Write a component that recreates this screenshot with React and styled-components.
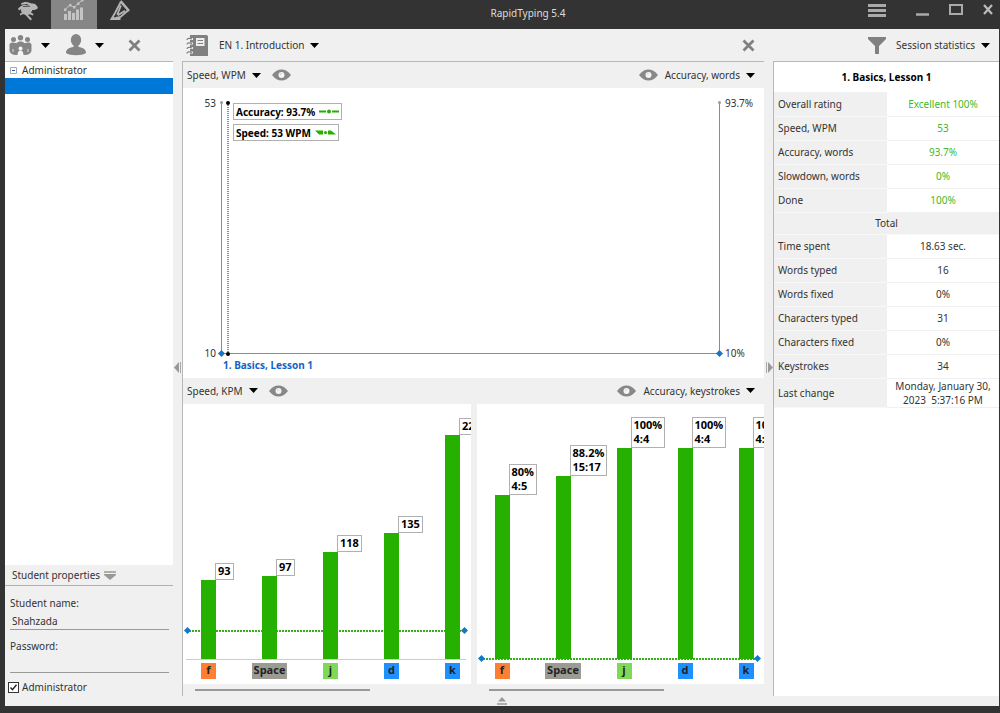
import React, { useState } from 'react';
import styled, { createGlobalStyle } from 'styled-components';

const GlobalStyle = createGlobalStyle`
    * {
        box-sizing: border-box;
    }

    body {
        margin: 0;
        background-color: #333333;
        color: #333333;
        font-family: "Noto Sans", "Open Sans", sans-serif;
        font-size: 10px;
        line-height: 14px;
    }

    button, input {
        font: inherit;
        color: inherit;
    }

    svg {
        display: block;
        flex: none;
    }
`

const Window = styled.div`
    display: flex;
    flex-direction: column;
    min-height: 100vh;
    padding: 0 1px 7px 5px;
    background-color: #333333;
`

const TitleBar = styled.header`
    display: grid;
    grid-template-columns: 1fr auto 1fr;
    height: 29px;
`

const Tabs = styled.nav`
    display: flex;
`

const TabButton = styled.button`
    display: flex;
    justify-content: center;
    width: 46px;
    height: 29px;
    padding: 0;
    border: 0;
    background-color: ${props => props.$active ? '#868686' : 'transparent'};
    cursor: pointer;
`

const AppTitle = styled.h1`
    margin: 0;
    padding-left: 52px;
    color: #dddddd;
    font-size: 10px;
    font-weight: normal;
    line-height: 26px;
`

const WindowControls = styled.div`
    display: flex;
    align-items: flex-start;
    justify-content: flex-end;
    gap: 20px;
    padding: 4px 6px 0 0;
`

const IconButton = styled.button`
    display: flex;
    align-items: center;
    justify-content: center;
    padding: 0;
    border: 0;
    background: none;
    cursor: pointer;
`

const MenuButton = styled(IconButton)`
    margin-right: 10px;
`

const Workspace = styled.main`
    display: flex;
    flex: 1;
    background-color: #f0f0f0;
`

const Splitter = styled.div`
    display: flex;
    align-items: center;
    justify-content: center;
    flex: none;
    width: 9px;
`

const Sidebar = styled.aside`
    display: flex;
    flex-direction: column;
    flex: none;
    width: 168px;
`

const Toolbar = styled.div`
    display: flex;
    align-items: center;
    justify-content: ${props => props.$justify || 'flex-start'};
    flex: none;
    gap: ${props => props.$gap || 10}px;
    height: 32px;
    padding: 0 9px 0 4px;
`

const Dropdown = styled.button`
    display: flex;
    align-items: center;
    gap: ${props => props.$gap || 6}px;
    padding: 0;
    border: 0;
    background: none;
    white-space: nowrap;
    cursor: pointer;
`

const DeleteButton = styled(IconButton)`
    margin-left: 8px;
`

const Tree = styled.ul`
    flex: 1;
    margin: 0;
    padding: 0;
    border-top: 1px solid #b8b8b8;
    background-color: white;
    list-style: none;
`

const TreeRow = styled.li`
    display: flex;
    align-items: center;
    gap: 5px;
    height: 16px;
    padding-left: 5px;
    background-color: ${props => props.$selected ? '#0078d7' : 'white'};
`

const PropertiesTitle = styled.button`
    display: flex;
    align-items: center;
    gap: 4px;
    height: 21px;
    padding: 0 7px;
    border: 0;
    border-bottom: 1px solid #b0b0b0;
    background: none;
    cursor: pointer;
`

const PropertiesForm = styled.form`
    display: flex;
    flex-direction: column;
    padding: 10px 4px 12px 3px;
`

const Field = styled.label`
    display: block;
    padding-left: 2px;

    & + & {
        margin-top: 9px;
    }

    input {
        display: block;
        width: 100%;
        height: 20px;
        padding: 3px 3px 0 2px;
        border: 0;
        border-bottom: 1px solid #999999;
        outline: 0;
        background: none;
    }
`

const CheckField = styled.label`
    display: flex;
    align-items: center;
    gap: 3px;
    height: 14px;
    margin-top: 7px;

    input {
        appearance: none;
        width: 11px;
        height: 11px;
        margin: 0;
        border: 1px solid #333333;
        background: white;
    }

    input:checked {
        background: white url("data:image/svg+xml,%3Csvg xmlns='http://www.w3.org/2000/svg' viewBox='0 0 9 9'%3E%3Cpath d='M1.5 4.5l2 2.2 4-5' fill='none' stroke='%23222' stroke-width='1.4'/%3E%3C/svg%3E");
    }
`

const Center = styled.section`
    display: flex;
    flex-direction: column;
    flex: 1;
    min-width: 0;
`

const ChartArea = styled.div`
    display: flex;
    flex-direction: column;
    flex: 1;
    border-top: 1px solid #b8b8b8;
    border-left: 1px solid #b8b8b8;
`

const ChartHeader = styled.div`
    display: flex;
    align-items: center;
    justify-content: space-between;
    flex: none;
    height: 26px;
    padding: 0 9px 0 4px;
`

const HeaderGroup = styled.div`
    display: flex;
    align-items: center;
    gap: ${props => props.$gap || 11}px;
`

const HistoryChart = styled.div`
    display: grid;
    grid-template-columns: 38px 1fr 44px;
    grid-template-rows: 1fr 18px;
    flex: 24 0 0;
    padding: 15px 0 6px;
    background-color: white;
`

const AxisLabels = styled.div`
    display: flex;
    flex-direction: column;
    justify-content: space-between;
    align-items: ${props => props.$right ? 'flex-start' : 'flex-end'};
    margin: -7px 0 -6px;
    padding: 0 5px;
`

const Plot = styled.div`
    position: relative;
    border: 1px solid #4a9be8;
    border-top: 0;
    padding-left: 5px;
`

const Cursor = styled.div`
    position: relative;
    height: 100%;
    padding-left: 6px;
    background: repeating-linear-gradient(#4a9be8 0 1px, white 1px 2px) 0 0 / 2px 100% no-repeat;
`

// Sits on a corner of its parent, centred on the line there
const Marker = styled.span`
    position: absolute;
    width: ${props => props.$size}px;
    height: ${props => props.$size}px;
    background-color: ${props => props.$color};
    border-radius: ${props => props.$diamond ? 0 : '50%'};
    transform: ${props => props.$diamond ? 'rotate(45deg)' : 'none'};
    ${props => props.$top ? 'top: -2px;' : 'bottom: -3px;'}
    ${props => props.$right ? 'right' : 'left'}: ${props => props.$inset || -3}px;
`

const Legend = styled.div`
    display: flex;
    flex-direction: column;
    align-items: flex-start;
    gap: 4px;
`

const LegendItem = styled.div`
    display: flex;
    align-items: center;
    gap: 4px;
    height: 17px;
    padding: 0 2px;
    border: 1px solid #b0b0b0;
    background-color: white;
    color: black;
    font-weight: bold;
`

const LessonCaption = styled.a`
    grid-column: 2;
    padding: 4px 2px 0;
    color: #1464c8;
    font-weight: bold;
    text-decoration: none;
`

const BarCharts = styled.div`
    display: grid;
    grid-template-columns: 1fr 1fr;
    gap: 6px;
    flex: 25 0 0;
`

const BarPanel = styled.div`
    display: flex;
    flex-direction: column;
    overflow: hidden;
    min-width: 0;
    background-color: white;
`

const BarPlot = styled.div`
    position: relative;
    display: flex;
    align-items: flex-end;
    flex: 1;
    gap: 16px;
    margin: 0 5px 0 3px;
    border-bottom: 1px solid #cccccc;
`

const BarColumn = styled.div`
    position: relative;
    z-index: 1;
    flex: none;
    width: 45px;
    padding: 0 15px;
`

const Bar = styled.div`
    position: relative;
    height: 100%;
    background-color: #26b000;
`

const BarValue = styled.div`
    position: absolute;
    left: 100%;
    bottom: 100%;
    margin-left: -1px;
    padding: 0 2px 1px;
    border: 1px solid #b0b0b0;
    background-color: white;
    color: black;
    font-family: "Open Sans", sans-serif;
    font-size: 11px;
    font-weight: bold;
    white-space: pre;
`

const Threshold = styled.div`
    position: absolute;
    left: 0;
    right: 0;
    height: 2px;
    margin-bottom: -1px;
    background: repeating-linear-gradient(90deg, #35b01a 0 2px, white 2px 3px);
`

const KeyRow = styled.div`
    display: flex;
    flex: none;
    gap: 16px;
    height: 24px;
    padding: 3px;
`

const KeySlot = styled.div`
    display: flex;
    justify-content: center;
    flex: none;
    width: 45px;
`

const KeyCap = styled.kbd`
    min-width: 15px;
    height: 16px;
    padding: 0 2px;
    background-color: ${props => props.$color};
    color: #222222;
    font-family: "Open Sans", sans-serif;
    font-size: 11px;
    font-weight: bold;
    text-align: center;
`

const ScrollRow = styled.div`
    display: grid;
    grid-template-columns: 1fr 1fr;
    gap: 6px;
    flex: none;
    height: 12px;
    padding-top: 5px;
`

const ScrollThumb = styled.div`
    width: 61%;
    height: 2px;
    margin-left: 12px;
    background-color: #999999;
`

const CollapseRow = styled.div`
    display: flex;
    align-items: center;
    justify-content: center;
    flex: none;
    height: 10px;
    padding-left: 58px;
`

const StatsPane = styled.aside`
    display: flex;
    flex-direction: column;
    flex: none;
    width: 226px;
`

const StatsBody = styled.div`
    flex: 1;
    margin-bottom: 10px;
    border-top: 1px solid #b8b8b8;
    border-left: 1px solid #b8b8b8;
    background-color: white;
`

const StatsTable = styled.table`
    width: 100%;
    border-collapse: collapse;
    table-layout: fixed;

    caption {
        height: 30px;
        color: black;
        font-weight: bold;
        line-height: 30px;
    }

    tr {
        height: 24px;
    }

    th, td {
        padding: 0 4px;
        font-weight: normal;
    }

    th {
        width: 113px;
        border-bottom: 1px solid #f8f8f8;
        background-color: #f0f0f0;
        text-align: left;
    }

    td {
        padding: 0 4px;
        border-bottom: 1px solid #f0f0f0;
        text-align: center;
    }
`

const ValueCell = styled.td`
    color: ${props => props.$good ? '#3fb92a' : '#333333'};
`

const SectionRow = styled.tr`
    && {
        height: 22px;
    }

    th {
        text-align: center;
    }
`

const rating = [
    ['Overall rating', 'Excellent 100%'],
    ['Speed, WPM', '53'],
    ['Accuracy, words', '93.7%'],
    ['Slowdown, words', '0%'],
    ['Done', '100%'],
]

const totals = [
    ['Time spent', '18.63 sec.'],
    ['Words typed', '16'],
    ['Words fixed', '0%'],
    ['Characters typed', '31'],
    ['Characters fixed', '0%'],
    ['Keystrokes', '34'],
]

const keys = [
    { name: 'f', color: '#ff7f32' },
    { name: 'Space', color: '#9b9b93' },
    { name: 'j', color: '#7ed957' },
    { name: 'd', color: '#1e90ff' },
    { name: 'k', color: '#1e90ff' },
]

const speedBars = [
    { value: 93, label: '93' },
    { value: 97, label: '97' },
    { value: 118, label: '118' },
    { value: 135, label: '135' },
    { value: 221, label: '221' },
]

const accuracyBars = [
    { value: 80, label: '80%\n4:5' },
    { value: 88.2, label: '88.2%\n15:17' },
    { value: 100, label: '100%\n4:4' },
    { value: 100, label: '100%\n4:4' },
    { value: 100, label: '100%\n4:4' },
]

const Caret = () => (
    <svg width="9" height="5" viewBox="0 0 9 5"><path d="M0 0h9L4.5 5z" fill="#000" /></svg>
)

const EyeIcon = () => (
    <svg width="19" height="12" viewBox="0 0 19 12">
        <path d="M0 6C3 2 6 .5 9.500 .5S16 2 19 6c-3 4-6 5.500-9.500 5.500S3 10 0 6z" fill="#888" />
        <circle cx="9.500" cy="6" r="3" fill="#f4f4f4" />
        <circle cx="8.800" cy="5" r=".8" fill="#ccc" />
    </svg>
)

const CloseIcon = () => (
    <svg width="13" height="13" viewBox="0 0 13 13"><path d="M1.500 1.500l10 10M11.500 1.500l-10 10" stroke="#808080" strokeWidth="2.800" /></svg>
)

const RabbitIcon = () => (
    <svg width="22" height="22" viewBox="0 0 22 22" fill="#b5b5b5">
        <path d="M4 3.500C7 1.500 11 1.500 14.500 3.500 18 3 20 5 21 8c-1.500 1.800-3.500 2.200-5.500 2l-1.500 2.500 2.500 1.500-.5 1.500-3.500-1.200-1.500.7 4 4-1.500 1.500-5-5.500-2.500-1-2.500 1.500-.8-1.500L5 12.500c-1-.8-1.300-2-.8-3.500L2 10.500 1 8.500l3-2.500 3-1.200 5 .7-2-1.500-5.500.8z" />
        <path d="M6 6.500l7-.3" stroke="#333" strokeWidth=".8" />
    </svg>
)

const ChartIcon = () => (
    <svg width="22" height="22" viewBox="0 0 22 22" fill="#c4c4c4">
        <path d="M1 14h3v6H1zM5 11h3v9H5zM9 13h3v7H9zM13 9.500h3V20h-3zM17 7.500h3V20h-3z" />
        <path d="M2 9.500l5-4.500 4 2.500L15 3.500 19.500 0" fill="none" stroke="#c4c4c4" strokeWidth="1" />
        <path d="M1 8.500h2.500V11H1zM6 4h2.500v2.500H6zM10 6h2.500v2.500H10zM14 2.500h2.500V5H14zM18 0h2.500v1.500H18z" />
    </svg>
)

const BrushIcon = () => (
    <svg width="22" height="22" viewBox="0 0 22 22" fill="none" stroke="#b5b5b5" strokeWidth="1.800">
        <path d="M11.500 1l8.500 10" strokeWidth="2.600" />
        <path d="M11.500 2.500L6 13l-3.500 6 9-2 7.500-6.500M12 5.500L8.500 14l1 .8 6.500-4M2.500 19h9" />
    </svg>
)

const MenuIcon = () => (
    <svg width="18" height="14" viewBox="0 0 18 14"><path d="M0 1.500h18M0 6.500h18M0 11.500h18" stroke="#aaa" strokeWidth="3" /></svg>
)

const MinimizeIcon = () => (
    <svg width="13" height="12" viewBox="0 0 13 12"><path d="M0 10.500h13" stroke="#aaa" strokeWidth="2.500" /></svg>
)

const MaximizeIcon = () => (
    <svg width="14" height="11" viewBox="0 0 14 11"><path d="M1 1h12v9H1z" fill="none" stroke="#aaa" strokeWidth="2" /></svg>
)

const ExitIcon = () => (
    <svg width="10" height="11" viewBox="0 0 10 11"><path d="M1 1l8 9M9 1l-8 9" stroke="#bbb" strokeWidth="2.200" /></svg>
)

const GroupIcon = () => (
    <svg width="23" height="21" viewBox="0 0 23 21" fill="#858585">
        <circle cx="4.500" cy="4.500" r="2.500" />
        <circle cx="11.500" cy="2.700" r="2.700" />
        <circle cx="18.500" cy="4.500" r="2.500" />
        <path d="M.5 9.500c1-2 3-2.500 7-1.200C9 6 14 6 15.500 8.300c4-1.300 6-.8 7 1.200V16c-1 2.500-3 4-6.500 4H7c-3.500 0-5.500-1.500-6.500-4z" />
        <path d="M4 14v3M19 14v3" stroke="#f0f0f0" strokeWidth=".8" />
        <circle cx="11.500" cy="13.500" r="2" fill="#f4f4f4" />
        <path d="M8.500 21c0-4 1.200-5.500 3-5.500s3 1.500 3 5.500z" fill="#f4f4f4" />
    </svg>
)

const UserIcon = () => (
    <svg width="20" height="22" viewBox="0 0 20 22" fill="#858585">
        <ellipse cx="10" cy="6" rx="5.200" ry="6" />
        <path d="M7.500 10h5v3c5 .8 7.500 2.500 7.500 6-4 3-16 3-20 0 0-3.500 2.500-5.200 7.500-6z" />
    </svg>
)

const BookIcon = () => (
    <svg width="22" height="21" viewBox="0 0 22 21">
        <path d="M4 0h16.500L22 1v20H4z" fill="#808080" />
        <path d="M10 3h8.500v8H10z" fill="#eee" />
        <path d="M11.500 5.500h5.500M11.500 8.500h5.500" stroke="#808080" strokeWidth="1.200" />
        <path d="M3 4h4M3 8.500h4M3 13h4M3 17.500h4" stroke="#f0f0f0" strokeWidth="1.800" />
        <path d="M1 5C1 3 4 3 6 4M1 9.500c0-2 3-2 5-1M1 14c0-2 3-2 5-1M1 18.500c0-2 3-2 5-1" fill="none" stroke="#808080" strokeWidth="1.300" />
    </svg>
)

const FunnelIcon = () => (
    <svg width="18" height="17" viewBox="0 0 18 17"><path d="M0 0h18v2l-7 7v8H7V9L0 2z" fill="#808080" /></svg>
)

const TreeToggleIcon = () => (
    <svg width="7" height="7" viewBox="0 0 7 7"><path d="M.5 .5h6v6h-6z" fill="#fff" stroke="#a0a8b4" /><path d="M2 3.500h3" stroke="#3c5a96" /></svg>
)

const PropertiesIcon = () => (
    <svg width="12" height="9" viewBox="0 0 12 9"><path d="M0 1h12" stroke="#999" strokeWidth="1.500" /><path d="M0 3h12v1L6 9 0 4z" fill="#999" /></svg>
)

const CollapseIcon = () => (
    <svg width="10" height="8" viewBox="0 0 10 8"><path d="M5 0l4 4.500H1z" fill="#999" /><path d="M0 7h10" stroke="#999" strokeWidth="1.500" /></svg>
)

const SplitIcon = ({ right }) => (
    <svg width="8" height="11" viewBox="0 0 8 11">
        {right
            ? <><path d="M1.500 0v11" stroke="#aaa" /><path d="M3 0l5 5.500L3 11z" fill="#999" /></>
            : <><path d="M6.500 0v11" stroke="#aaa" /><path d="M5 0v11L0 5.500z" fill="#999" /></>}
    </svg>
)

const AccuracyLine = () => (
    <svg width="20" height="5" viewBox="0 0 20 5"><path d="M0 2.500h7M13 2.500h7" stroke="#26b000" strokeWidth="2" /><circle cx="10" cy="2.500" r="2" fill="#26b000" /></svg>
)

const SpeedLine = () => (
    <svg width="21" height="5" viewBox="0 0 21 5" fill="#26b000"><path d="M0 .5h8v4H4zM13 .5h3l5 4h-8z" /><circle cx="10.500" cy="2.500" r="1.600" /></svg>
)

const BarChart = ({ bars, min, range, threshold }) => (
    <BarPanel>
        <BarPlot>
            <Threshold style={{ bottom: `${threshold}%` }} />
            <Marker $diamond $size={5} $inset={-1} $color="#1478c8" style={{ bottom: `calc(${threshold}% - 2px)` }} />
            <Marker $diamond $right $size={5} $inset={-1} $color="#1478c8" style={{ bottom: `calc(${threshold}% - 2px)` }} />
            {bars.map((bar, i) => (
                <BarColumn key={i} style={{ height: `${(bar.value - min) / range * 100}%` }}>
                    <Bar><BarValue>{bar.label}</BarValue></Bar>
                </BarColumn>
            ))}
        </BarPlot>
        <KeyRow>
            {keys.map(key => <KeySlot key={key.name}><KeyCap $color={key.color}>{key.name}</KeyCap></KeySlot>)}
        </KeyRow>
    </BarPanel>
)

const App = () => {
    const [name, changeName] = useState('Shahzada');
    const [password, changePassword] = useState('');
    const [isAdmin, changeAdmin] = useState(true);

    return (
        <>
            <GlobalStyle />
            <Window>
                <TitleBar>
                    <Tabs>
                        <TabButton aria-label="Lessons"><RabbitIcon /></TabButton>
                        <TabButton aria-label="Statistics" $active><ChartIcon /></TabButton>
                        <TabButton aria-label="Editor"><BrushIcon /></TabButton>
                    </Tabs>
                    <AppTitle>RapidTyping 5.4</AppTitle>
                    <WindowControls>
                        <MenuButton aria-label="Menu"><MenuIcon /></MenuButton>
                        <IconButton aria-label="Minimize"><MinimizeIcon /></IconButton>
                        <IconButton aria-label="Maximize"><MaximizeIcon /></IconButton>
                        <IconButton aria-label="Exit"><ExitIcon /></IconButton>
                    </WindowControls>
                </TitleBar>
                <Workspace>
                    <Sidebar>
                        <Toolbar $gap={16}>
                            <Dropdown $gap={9} aria-label="Groups"><GroupIcon /><Caret /></Dropdown>
                            <Dropdown $gap={9} aria-label="Students"><UserIcon /><Caret /></Dropdown>
                            <DeleteButton aria-label="Delete"><CloseIcon /></DeleteButton>
                        </Toolbar>
                        <Tree>
                            <TreeRow><TreeToggleIcon />Administrator</TreeRow>
                            <TreeRow $selected />
                        </Tree>
                        <PropertiesTitle>Student properties<PropertiesIcon /></PropertiesTitle>
                        <PropertiesForm>
                            <Field>Student name:<input value={name} onChange={e => changeName(e.target.value)} /></Field>
                            <Field>Password:<input type="password" value={password} onChange={e => changePassword(e.target.value)} /></Field>
                            <CheckField><input type="checkbox" checked={isAdmin} onChange={e => changeAdmin(e.target.checked)} />Administrator</CheckField>
                        </PropertiesForm>
                    </Sidebar>
                    <Splitter><SplitIcon /></Splitter>
                    <Center>
                        <Toolbar $justify="space-between">
                            <Dropdown><HeaderGroup><BookIcon />EN 1. Introduction</HeaderGroup><Caret /></Dropdown>
                            <IconButton aria-label="Close"><CloseIcon /></IconButton>
                        </Toolbar>
                        <ChartArea>
                            <ChartHeader>
                                <HeaderGroup><Dropdown>Speed, WPM<Caret /></Dropdown><EyeIcon /></HeaderGroup>
                                <HeaderGroup $gap={7}><EyeIcon /><Dropdown>Accuracy, words<Caret /></Dropdown></HeaderGroup>
                            </ChartHeader>
                            <HistoryChart>
                                <AxisLabels><span>53</span><span>10</span></AxisLabels>
                                <Plot>
                                    <Marker $top $size={3} $inset={-2} $color="#999999" />
                                    <Marker $top $right $size={3} $inset={-2} $color="#999999" />
                                    <Marker $diamond $size={5} $color="#1478c8" />
                                    <Marker $diamond $right $size={5} $color="#1478c8" />
                                    <Cursor>
                                        <Marker $top $size={4} $inset={-1} $color="#000000" />
                                        <Marker $size={4} $inset={-1} $color="#000000" />
                                        <Legend>
                                            <LegendItem>Accuracy: 93.7%<AccuracyLine /></LegendItem>
                                            <LegendItem>Speed: 53 WPM<SpeedLine /></LegendItem>
                                        </Legend>
                                    </Cursor>
                                </Plot>
                                <AxisLabels $right><span>93.7%</span><span>10%</span></AxisLabels>
                                <LessonCaption href="#lesson">1. Basics, Lesson 1</LessonCaption>
                            </HistoryChart>
                            <ChartHeader>
                                <HeaderGroup><Dropdown>Speed, KPM<Caret /></Dropdown><EyeIcon /></HeaderGroup>
                                <HeaderGroup $gap={7}><EyeIcon /><Dropdown>Accuracy, keystrokes<Caret /></Dropdown></HeaderGroup>
                            </ChartHeader>
                            <BarCharts>
                                <BarChart bars={speedBars} min={24} range={224} threshold={11} />
                                <BarChart bars={accuracyBars} min={10} range={109} threshold={0} />
                            </BarCharts>
                            <ScrollRow><ScrollThumb /><ScrollThumb /></ScrollRow>
                        </ChartArea>
                        <CollapseRow><CollapseIcon /></CollapseRow>
                    </Center>
                    <Splitter><SplitIcon right /></Splitter>
                    <StatsPane>
                        <Toolbar $justify="flex-end"><FunnelIcon /><Dropdown>Session statistics<Caret /></Dropdown></Toolbar>
                        <StatsBody>
                            <StatsTable>
                                <caption>1. Basics, Lesson 1</caption>
                                <tbody>
                                    {rating.map(([label, value]) => <tr key={label}><th scope="row">{label}</th><ValueCell $good>{value}</ValueCell></tr>)}
                                    <SectionRow><th colSpan="2">Total</th></SectionRow>
                                    {totals.map(([label, value]) => <tr key={label}><th scope="row">{label}</th><ValueCell>{value}</ValueCell></tr>)}
                                    <tr><th scope="row">Last change</th><ValueCell>Monday, January 30, 2023&nbsp; 5:37:16 PM</ValueCell></tr>
                                </tbody>
                            </StatsTable>
                        </StatsBody>
                    </StatsPane>
                </Workspace>
            </Window>
        </>
    )
}

export default App;
